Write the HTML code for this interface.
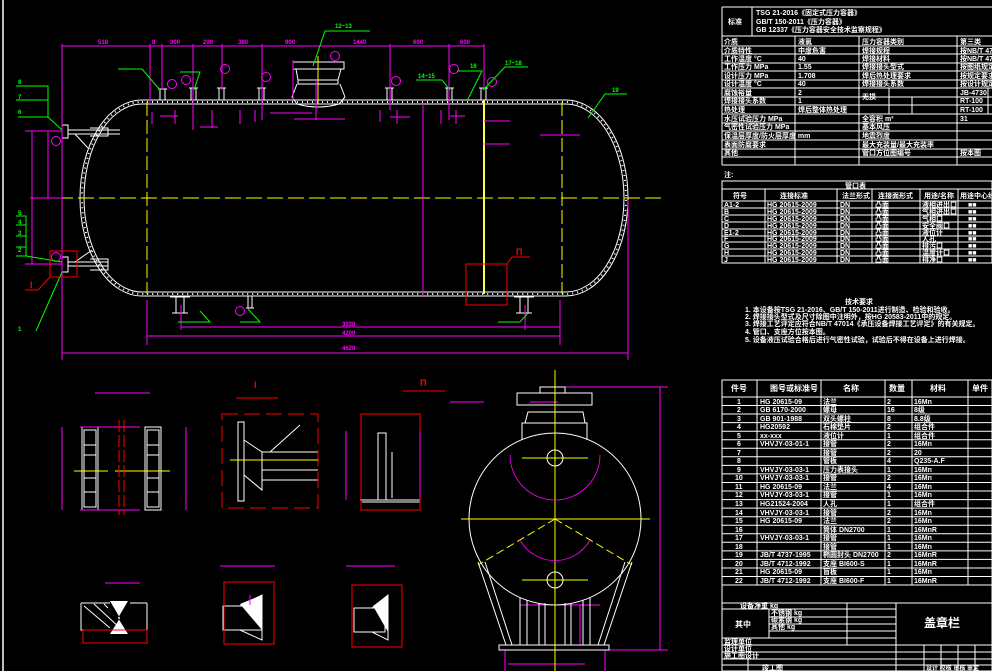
<!DOCTYPE html>
<html><head><meta charset="utf-8"><style>
html,body{margin:0;padding:0;background:#000;overflow:hidden}
svg{display:block}
text{font-family:"Liberation Sans","Noto Sans CJK SC",sans-serif;font-weight:bold}
</style></head><body>
<svg width="992" height="671" viewBox="0 0 992 671" xmlns="http://www.w3.org/2000/svg">
<rect width="992" height="671" fill="#000"/>
<line x1="3" y1="0" x2="3" y2="671" stroke="#fff" stroke-width="1.5"/>

<!-- ===== MAIN VESSEL ===== -->
<g fill="none" stroke="#fff" stroke-width="1">
<path d="M142 100 L566 100 A62 98 0 0 1 566 296 L142 296 A62 98 0 0 1 142 100 Z"/>
<path d="M142 104 L566 104 A58 94 0 0 1 566 292 L142 292 A58 94 0 0 1 142 104 Z"/>
<path d="M142 102 L566 102 A60 96 0 0 1 566 294 L142 294 A60 96 0 0 1 142 102 Z" stroke-dasharray="1,4" stroke-width="2"/>
<!-- manhole -->
<path d="M293 62 H344 V69 H293 Z M296 69 L298 80 H338 L341 69 M298 80 H338 V84 H298 Z M297 84 L292 97 L297 104 Q318 110 339 104 L345 97 L340 84"/>
<!-- nozzles top -->
<path d="M160 89 V100 M165 89 V100 M158 89 H167"/>
<path d="M191 88 V100 M196 88 V100 M189 88 H198"/>
<path d="M219 88 V100 M224 88 V100 M217 88 H226"/>
<path d="M259 88 V100 M264 88 V100 M257 88 H266"/>
<path d="M387 88 V100 M392 88 V100 M385 88 H394"/>
<path d="M447 88 V100 M452 88 V100 M445 88 H454"/>
<path d="M481 88 V100 M486 88 V100 M479 88 H488"/>
<!-- left nozzles -->
<path d="M62 125 H68 V138 H62 Z M68 130 H120 M68 134 H120 M90 128 H108 V136 H90 M75 134 L88 148"/>
<path d="M62 257 H68 V272 H62 Z M68 262 H108 M68 266 H108 M90 259 H108 V270 H90 M75 262 L92 250"/>
<!-- supports -->
<path d="M176 296 V313 M184 296 V313 M172 313 H188 M170 297 H190"/>
<path d="M520 296 V313 M528 296 V313 M516 313 H532 M514 297 H534"/>
<path d="M248 296 V308 M252 296 V308 M246 308 H254"/>
</g>
<line x1="484" y1="100" x2="484" y2="294" stroke="#ff0" stroke-width="2"/>
<line x1="484" y1="100" x2="484" y2="294" stroke="#fff" stroke-width="0.6"/>
<line x1="36" y1="198" x2="663" y2="198" stroke="#ff0" stroke-dasharray="16,5"/>
<line x1="147" y1="102" x2="147" y2="294" stroke="#ff0" stroke-dasharray="14,4"/>
<line x1="562" y1="102" x2="562" y2="294" stroke="#ff0" stroke-dasharray="14,4"/>
<line x1="318" y1="56" x2="318" y2="104" stroke="#ff0"/>

<!-- dimensions magenta -->
<g stroke="#f0f" stroke-width="1" fill="none">
<path d="M62 46 H484 M62 44 V360 M150 44 V104 M162 44 V90 M193 44 V130 M222 44 V90 M262 44 V120 M390 44 V110 M449 44 V120 M484 44 V90 M293 60 V100 M316 80 V120"/>
<path d="M181 327 H560 M147 336 H560 M62 353 H628 M147 300 V345 M560 300 V345 M628 200 V360 M181 305 V330 M525 305 V330"/>
<path d="M25 131 H62 M25 264 H62 M32 131 V264 M48 131 V198 M30 198 H62"/>
<path d="M423 104 V296 M294 119 H345 M270 113 H312 M200 127 H218 M160 116 H178 M390 117 H410 M450 116 H465 M484 121 H510 M484 144 H510 M540 135 H580 M152 112 V124 M175 110 V124 M212 110 V128 M240 110 V124 M255 110 V122 M380 110 V122 M397 110 V124 M441 110 V124 M456 110 V124"/>
<path d="M530 402 H558 M660 387 V650 M560 387 H668 M560 650 H668 M580 604 V645 M520 605 H600 M508 664 H585 M505 650 V671 M605 650 V671"/>
<circle cx="56" cy="141" r="4.5"/><circle cx="56" cy="257" r="4.5"/><circle cx="172" cy="84" r="4.5"/><circle cx="186" cy="80" r="4.5"/>
<circle cx="225" cy="69" r="4.5"/><circle cx="266" cy="77" r="4.5"/><circle cx="335" cy="56" r="4.5"/><circle cx="396" cy="81" r="4.5"/>
<circle cx="454" cy="69" r="4.5"/><circle cx="492" cy="82" r="4.5"/><circle cx="240" cy="311" r="4.5"/>
</g>
<g fill="#f0f" font-size="6">
<text x="98" y="44">518</text><text x="152" y="44">8</text><text x="170" y="44">300</text><text x="203" y="44">200</text><text x="238" y="44">380</text><text x="285" y="44">900</text><text x="353" y="44">1440</text><text x="413" y="44">600</text><text x="460" y="44">600</text>
<text x="342" y="326">3030</text><text x="342" y="335">4200</text><text x="342" y="350">4620</text>
</g>

<!-- green leaders -->
<g stroke="#0f0" fill="none">
<path d="M16 86 H48 V118 M16 100 H48 M18 117 H48 L62 130"/>
<path d="M16 216 H26 V256 M16 225 H26 M16 236 H26 M16 247 H26 M16 256 H26 L62 262"/>
<path d="M36 331 L62 272"/>
<path d="M118 69 H142 L160 90 M180 72 H200 L194 90 M370 31 H325 L313 66 M416 80 H442 L450 90 M457 71 H482 L468 99 M528 67 H505 L483 90 M627 94 H605 L588 118 M178 322 H210 L200 311 M240 322 H260 L248 309 M498 322 H520 L528 313"/>
</g>
<g fill="#0f0" font-size="6">
<text x="18" y="84">8</text><text x="18" y="99">7</text><text x="18" y="114">6</text>
<text x="18" y="215">5</text><text x="18" y="224">4</text><text x="18" y="235">3</text><text x="18" y="252">2</text><text x="18" y="331">1</text>
<text x="335" y="28">12~13</text><text x="418" y="78">14~15</text><text x="505" y="65">17~18</text><text x="612" y="92">19</text><text x="470" y="68">16</text>
</g>
<!-- red detail marks -->
<g stroke="#f00" fill="none">
<rect x="50" y="251" width="27" height="26"/><path d="M50 277 L38 290 H25"/>
<rect x="466" y="264" width="41" height="41"/><path d="M507 264 L512 257 H530"/>
</g>
<g fill="#f00" font-size="9"><text x="30" y="288">I</text><text x="516" y="255">Π</text></g>

<!-- ===== BOTTOM DETAILS ===== -->
<g stroke="#fff" fill="none">
<rect x="82" y="427" width="16" height="83"/><rect x="84" y="430" width="12" height="77"/>
<rect x="145" y="427" width="16" height="83"/><rect x="147" y="430" width="12" height="77"/>
<path d="M84 445 H96 M84 455 H96 M84 478 H96 M84 492 H96 M147 445 H159 M147 455 H159 M147 478 H159 M147 492 H159"/>
<path d="M238 422 H244 V501 H238 Z M244 440 L262 452 V490 L244 475 M262 452 H318 M262 460 H318 M262 470 H318 M262 480 H318 M270 452 L300 425"/>
<path d="M378 433 H386 V500 H378 Z M386 433 V500 M392 452 V498 M360 500 H420 M362 502 H420"/>
<ellipse cx="555" cy="519" rx="86" ry="86"/>
<path d="M522 440 V423 H587 V440 M525 423 L528 412 H583 L585 423 M517 405 H592 V393 H517 Z M540 393 V387 H565 V393"/>
<path d="M478 562 L506 645 M485 562 L512 645 M632 562 L604 645 M625 562 L598 645 M520 598 V645 M527 600 V645 M539 603 V645 M545 603 V645 M565 603 V645 M571 603 V645 M583 600 V645 M590 598 V645 M499 645 H609 V650 H499 Z"/>
<circle cx="555" cy="458" r="8"/><circle cx="555" cy="580" r="8"/>
<path d="M81 603 H110 M130 603 H147 M81 603 V630 H147 V603 M84 606 L110 628 M94 604 L120 628 M104 604 L108 608"/>
<path d="M223 606 H262 V630 H223 Z M240 606 L262 595 V640 L240 630"/>
<path d="M354 608 H385 V632 H354 Z M372 608 L388 595 V640 L372 632"/>
</g>
<g fill="#fff"><path d="M110 601 L120 618 L110 634 L128 634 L118 618 L128 601 Z"/><path d="M240 604 L262 595 V630 Z"/><path d="M373 606 L388 595 V632 Z"/></g>
<g stroke="#f00" fill="none">
<rect x="222" y="414" width="96" height="94" stroke-dasharray="16,6"/><rect x="361" y="414" width="59" height="96"/>
<path d="M236 398 H278 M403 391 H445"/>
<rect x="83" y="630" width="64" height="13"/><rect x="224" y="582" width="50" height="62"/><rect x="352" y="585" width="50" height="62"/>
</g>
<g fill="#f00" font-size="9"><text x="254" y="388">I</text><text x="420" y="386">Π</text></g>
<g stroke="#ff0" fill="none">
<path d="M555 370 V671 M461 519 H650 M522 458 H588 M522 580 H588 M74 471 H108 M115 471 H170"/>
<path d="M555 519 L478 565 M555 519 L632 565" stroke-dasharray="8,4"/>
<path d="M230 460 H318"/>
</g>
<g stroke="#f0f" fill="none">
<path d="M95 393 H150 M62 427 V510 M186 427 V510 M140 427 H80 M140 510 H80 M420 431 V498 M346 431 V500 M250 595 V605 M105 583 H140 M220 566 H275 M346 566 H395 M484 402 H450"/>
<path d="M510 455 A40 40 0 0 0 600 455" stroke-width="0.8"/>
<path d="M520 540 A40 40 0 0 0 590 540" stroke-width="0.8"/>
</g>
<line x1="119" y1="420" x2="119" y2="515" stroke="#f00" stroke-dasharray="12,3"/>
<line x1="124" y1="420" x2="124" y2="515" stroke="#f00" stroke-dasharray="12,3"/>

<!-- ===== RIGHT TABLES ===== -->
<g stroke="#fff" fill="none" stroke-width="1">
<path d="M722 7 H992 M722 7 V165 M752 7 V36 M722 36 H992"/>
<path d="M722 46 H992 M722 54 H992 M722 63 H992 M722 71 H992 M722 80 H992 M722 88 H992 M722 97 H992 M722 105 H992 M722 114 H992 M722 123 H992 M722 131 H992 M722 140 H992 M722 149 H992 M722 157 H992 M722 165 H992"/>
<path d="M795 36 V165 M859 36 V165 M957 36 V165 M889 88 V114 M912 97 V114 M889 105 H957 M988 88 V114"/>
<path d="M722 181 H992 V263 H722 Z M722 189 H992 M722 201 H992 M722 208 H992 M722 215 H992 M722 222 H992 M722 229 H992 M722 236 H992 M722 242 H992 M722 249 H992 M722 256 H992"/>
<path d="M765 189 V263 M837 189 V263 M872 189 V263 M920 189 V263 M958 189 V263"/>
<path d="M722 380 H992 V671 H722 Z M722 397 H992 M722 405.5 H992 M722 414 H992 M722 422.6 H992 M722 431.2 H992 M722 439.7 H992 M722 448.3 H992 M722 456.8 H992 M722 465.4 H992 M722 473.9 H992 M722 482.5 H992 M722 491 H992 M722 499.6 H992 M722 508.1 H992 M722 516.7 H992 M722 525.2 H992 M722 533.8 H992 M722 542.3 H992 M722 550.9 H992 M722 559.4 H992 M722 568 H992 M722 576.5 H992 M722 585 H992"/>
<path d="M757 380 V585 M821 380 V585 M885 380 V585 M912 380 V585 M968 380 V585"/>
<path d="M722 603 H992 M722 609 H896 M769 617 H896 M769 624 H896 M769 631 H896 M722 638 H896 M722 645 H992 M722 652 H992 M722 659 H992 M722 665 H992 M769 609 V638 M847 603 V645 M896 603 V671 M924 645 V671 M941 645 V671 M958 645 V671 M975 645 V671 M748 659 V671"/>
</g>
<g fill="#fff" font-size="7">
<text x="728" y="24">标准</text>
<text x="756" y="15">TSG 21-2016《固定式压力容器》</text>
<text x="756" y="24">GB/T 150-2011《压力容器》</text>
<text x="756" y="32">GB 12337《压力容器安全技术监察规程》</text>
<text x="724" y="44">介质</text><text x="798" y="44">液氯</text><text x="862" y="44">压力容器类别</text><text x="960" y="44">第三类</text>
<text x="724" y="53">介质特性</text><text x="798" y="53">中度危害</text><text x="862" y="53">焊接规程</text><text x="960" y="53">按NB/T 470</text>
<text x="724" y="61">工作温度 °C</text><text x="798" y="61">40</text><text x="862" y="61">焊接材料</text><text x="960" y="61">按NB/T 470</text>
<text x="724" y="69">工作压力 MPa</text><text x="798" y="69">1.55</text><text x="862" y="69">焊接接头型式</text><text x="960" y="69">按图纸规定</text>
<text x="724" y="78">设计压力 MPa</text><text x="798" y="78">1.708</text><text x="862" y="78">焊后热处理要求</text><text x="960" y="78">按规定要求</text>
<text x="724" y="86">设计温度 °C</text><text x="798" y="86">40</text><text x="862" y="86">焊接接头系数</text><text x="960" y="86">按设计规定</text>
<text x="724" y="95">腐蚀裕量</text><text x="798" y="95">2</text><text x="862" y="99">无损</text><text x="960" y="95">JB-4730</text>
<text x="724" y="103">焊接接头系数</text><text x="798" y="103">1</text><text x="960" y="103">RT-100</text>
<text x="724" y="112">热处理</text><text x="798" y="112">焊后整体热处理</text><text x="960" y="112">RT-100</text>
<text x="724" y="121">水压试验压力 MPa</text><text x="862" y="121">全容积 m³</text><text x="960" y="121">31</text>
<text x="724" y="129">气密性试验压力 MPa</text><text x="862" y="129">基本风压</text>
<text x="724" y="138">保温层厚度/防火层厚度 mm</text><text x="862" y="138">地震烈度</text>
<text x="724" y="147">表面防腐要求</text><text x="862" y="147">最大充装量/最大充装率</text>
<text x="724" y="155">其他</text><text x="862" y="155">管口方位图编号</text><text x="960" y="155">按本图</text>
<text x="724" y="177">注:</text>
<text x="845" y="188">管口表</text>
<text x="733" y="198">符号</text><text x="780" y="198">连接标准</text><text x="842" y="198">法兰形式</text><text x="878" y="198">连接面形式</text><text x="924" y="198">用途/名称</text><text x="960" y="198">用途中心线</text>
<text x="724" y="207">A1-2</text><text x="767" y="207">HG 20615-2009</text><text x="840" y="207">DN</text><text x="875" y="207">凸面</text><text x="922" y="207">液相进出口</text><text x="968" y="207">■■</text>
<text x="724" y="214">B</text><text x="767" y="214">HG 20615-2009</text><text x="840" y="214">DN</text><text x="875" y="214">凸面</text><text x="922" y="214">气相进出口</text><text x="968" y="214">■■</text>
<text x="724" y="221">C</text><text x="767" y="221">HG 20615-2009</text><text x="840" y="221">DN</text><text x="875" y="221">凸面</text><text x="922" y="221">气相口</text><text x="968" y="221">■■</text>
<text x="724" y="228">D</text><text x="767" y="228">HG 20615-2009</text><text x="840" y="228">DN</text><text x="875" y="228">凸面</text><text x="922" y="228">安全阀口</text><text x="968" y="228">■■</text>
<text x="724" y="235">E1-2</text><text x="767" y="235">HG 20615-2009</text><text x="840" y="235">DN</text><text x="875" y="235">凸面</text><text x="922" y="235">液位计</text><text x="968" y="235">■■</text>
<text x="724" y="241">F</text><text x="767" y="241">HG 20615-2009</text><text x="840" y="241">DN</text><text x="875" y="241">凸面</text><text x="922" y="241">人孔</text><text x="968" y="241">■■</text>
<text x="724" y="248">G</text><text x="767" y="248">HG 20615-2009</text><text x="840" y="248">DN</text><text x="875" y="248">凸面</text><text x="922" y="248">排污口</text><text x="968" y="248">■■</text>
<text x="724" y="255">H</text><text x="767" y="255">HG 20615-2009</text><text x="840" y="255">DN</text><text x="875" y="255">凸面</text><text x="922" y="255">温度计口</text><text x="968" y="255">■■</text>
<text x="724" y="262">J</text><text x="767" y="262">HG 20615-2009</text><text x="840" y="262">DN</text><text x="875" y="262">凸面</text><text x="922" y="262">排净口</text><text x="968" y="262">■■</text>
<text x="845" y="304">技术要求</text>
<text x="745" y="312">1. 本设备按TSG 21-2016、GB/T 150-2011进行制造、检验和验收。</text>
<text x="745" y="319">2. 焊接接头型式及尺寸除图中注明外，按HG 20583-2011中的规定。</text>
<text x="745" y="326">3. 焊接工艺评定应符合NB/T 47014《承压设备焊接工艺评定》的有关规定。</text>
<text x="745" y="334">4. 管口、支座方位按本图。</text>
<text x="745" y="342">5. 设备液压试验合格后进行气密性试验，试验后不得在设备上进行焊接。</text>
<text x="731" y="391" font-size="8">件号</text><text x="770" y="391" font-size="8">图号或标准号</text><text x="843" y="391" font-size="8">名称</text><text x="889" y="391" font-size="8">数量</text><text x="930" y="391" font-size="8">材料</text><text x="972" y="391" font-size="8">单件</text>
<text x="737" y="404">1</text><text x="737" y="412">2</text><text x="737" y="421">3</text><text x="737" y="429">4</text><text x="737" y="438">5</text><text x="737" y="446">6</text><text x="737" y="455">7</text><text x="737" y="463">8</text><text x="737" y="472">9</text><text x="735" y="480">10</text><text x="735" y="489">11</text><text x="735" y="497">12</text><text x="735" y="506">13</text><text x="735" y="515">14</text><text x="735" y="523">15</text><text x="735" y="532">16</text><text x="735" y="540">17</text><text x="735" y="549">18</text><text x="735" y="557">19</text><text x="735" y="566">20</text><text x="735" y="574">21</text><text x="735" y="583">22</text>
<text x="760" y="404">HG 20615-09</text><text x="823" y="404">法兰</text><text x="887" y="404">2</text><text x="914" y="404">16Mn</text>
<text x="760" y="412">GB 6170-2000</text><text x="823" y="412">螺母</text><text x="887" y="412">16</text><text x="914" y="412">8级</text>
<text x="760" y="421">GB 901-1988</text><text x="823" y="421">双头螺柱</text><text x="887" y="421">8</text><text x="914" y="421">8.8级</text>
<text x="760" y="429">HG20592</text><text x="823" y="429">石棉垫片</text><text x="887" y="429">2</text><text x="914" y="429">组合件</text>
<text x="760" y="438">xx-xxx</text><text x="823" y="438">液位计</text><text x="887" y="438">1</text><text x="914" y="438">组合件</text>
<text x="760" y="446">VHVJY-03-01-1</text><text x="823" y="446">接管</text><text x="887" y="446">2</text><text x="914" y="446">16Mn</text>
<text x="823" y="455">接管</text><text x="887" y="455">2</text><text x="914" y="455">20</text>
<text x="823" y="463">管板</text><text x="887" y="463">4</text><text x="914" y="463">Q235-A.F</text>
<text x="760" y="472">VHVJY-03-03-1</text><text x="823" y="472">压力表接头</text><text x="887" y="472">1</text><text x="914" y="472">16Mn</text>
<text x="760" y="480">VHVJY-03-03-1</text><text x="823" y="480">接管</text><text x="887" y="480">2</text><text x="914" y="480">16Mn</text>
<text x="760" y="489">HG 20615-09</text><text x="823" y="489">法兰</text><text x="887" y="489">4</text><text x="914" y="489">16Mn</text>
<text x="760" y="497">VHVJY-03-03-1</text><text x="823" y="497">接管</text><text x="887" y="497">1</text><text x="914" y="497">16Mn</text>
<text x="760" y="506">HG21524-2004</text><text x="823" y="506">人孔</text><text x="887" y="506">1</text><text x="914" y="506">组合件</text>
<text x="760" y="515">VHVJY-03-03-1</text><text x="823" y="515">接管</text><text x="887" y="515">2</text><text x="914" y="515">16Mn</text>
<text x="760" y="523">HG 20615-09</text><text x="823" y="523">法兰</text><text x="887" y="523">2</text><text x="914" y="523">16Mn</text>
<text x="823" y="532">筒体 DN2700</text><text x="887" y="532">1</text><text x="914" y="532">16MnR</text>
<text x="760" y="540">VHVJY-03-03-1</text><text x="823" y="540">接管</text><text x="887" y="540">1</text><text x="914" y="540">16Mn</text>
<text x="823" y="549">接管</text><text x="887" y="549">1</text><text x="914" y="549">16Mn</text>
<text x="760" y="557">JB/T 4737-1995</text><text x="823" y="557">椭圆封头 DN2700</text><text x="887" y="557">2</text><text x="914" y="557">16MnR</text>
<text x="760" y="566">JB/T 4712-1992</text><text x="823" y="566">支座 BI600-S</text><text x="887" y="566">1</text><text x="914" y="566">16MnR</text>
<text x="760" y="574">HG 20615-09</text><text x="823" y="574">盲板</text><text x="887" y="574">1</text><text x="914" y="574">16Mn</text>
<text x="760" y="583">JB/T 4712-1992</text><text x="823" y="583">支座 BI600-F</text><text x="887" y="583">1</text><text x="914" y="583">16MnR</text>
<text x="740" y="608">设备净重 kg</text>
<text x="735" y="627" font-size="8">其中</text>
<text x="771" y="615">不锈钢 kg</text><text x="771" y="622">碳素钢 kg</text><text x="771" y="629">其他 kg</text>
<text x="724" y="644">监理单位</text><text x="724" y="651">设计单位</text><text x="724" y="658">施工图设计</text><text x="762" y="670">竣工图</text>
<text x="924" y="627" font-size="12">盖章栏</text>
<text x="926" y="670" font-size="6">设计 校核 审核 审定</text>
</g>
</svg>
</body></html>
